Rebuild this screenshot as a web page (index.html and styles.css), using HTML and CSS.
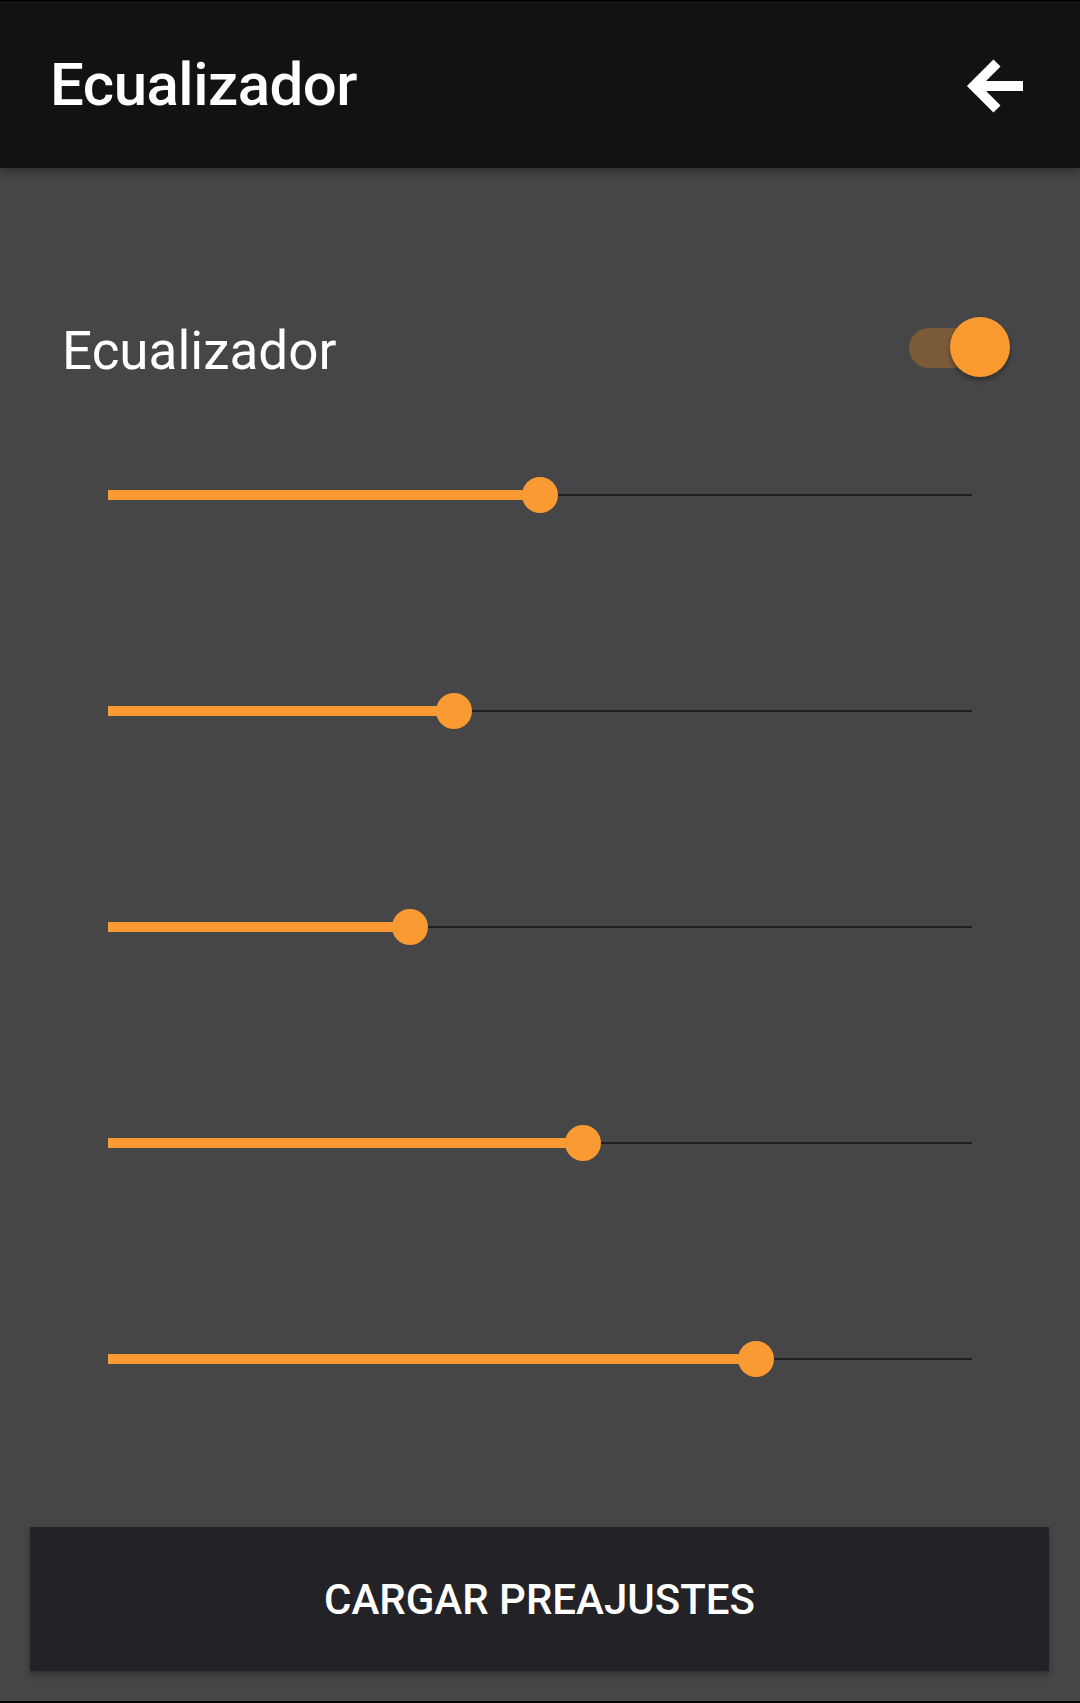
FILE: index.html
```html
<!DOCTYPE html>
<html lang="es">
<head>
<meta charset="utf-8">
<title>Ecualizador</title>
<link rel="stylesheet" href="styles.css">
</head>
<body>
<div class="screen">
  <header class="appbar">
    <h1 class="appbar-title">Ecualizador</h1>
    <button class="back" aria-label="Atrás">
      <svg viewBox="0 0 60 56" width="60" height="56"><path d="M31 5 L8 28 L31 51 M8 28 H57" fill="none" stroke="#fff" stroke-width="10"/></svg>
    </button>
  </header>
  <main class="content">
    <div class="toggle-row">
      <span class="toggle-label">Ecualizador</span>
      <span class="switch"><span class="switch-track"></span><span class="switch-thumb"></span></span>
    </div>
    <div class="sliders">
      <div class="slider-row"><div class="slider"><div class="fill" style="width:50%"></div><div class="thumb" style="left:50%"></div></div></div>
      <div class="slider-row"><div class="slider"><div class="fill" style="width:40%"></div><div class="thumb" style="left:40%"></div></div></div>
      <div class="slider-row"><div class="slider"><div class="fill" style="width:35%"></div><div class="thumb" style="left:35%"></div></div></div>
      <div class="slider-row"><div class="slider"><div class="fill" style="width:55%"></div><div class="thumb" style="left:55%"></div></div></div>
      <div class="slider-row"><div class="slider"><div class="fill" style="width:75%"></div><div class="thumb" style="left:75%"></div></div></div>
    </div>
    <button class="preset">CARGAR PREAJUSTES</button>
  </main>
</div>
</body>
</html>
```
FILE: styles.css
```css
html, body {
  margin: 0;
  padding: 0;
  background: #000;
}
.screen {
  width: 1080px;
  height: 1701px;
  background: #464547;
  font-family: Roboto, "Noto Sans", sans-serif;
  border-bottom: 2px solid #000;
  overflow: hidden;
}
.appbar {
  height: 168px;
  box-sizing: border-box;
  background: #121114;
  border-top: 1px solid #000;
  display: flex;
  align-items: center;
  justify-content: space-between;
  padding: 0 54px 0 50px;
  box-shadow: 0 4px 8px rgba(0,0,0,0.35);
  position: relative;
  z-index: 1;
}
.appbar-title {
  margin: 0;
  color: #fff;
  font-size: 60px;
  font-weight: 500;
  letter-spacing: -0.5px;
}
.back {
  background: none;
  border: 0;
  padding: 0;
  width: 60px;
  height: 56px;
  display: flex;
  margin-top: 2px;
}
.content {
  display: flex;
  flex-direction: column;
}
.toggle-row {
  margin-top: 139px;
  height: 80px;
  display: flex;
  align-items: center;
  justify-content: space-between;
  padding: 0 70px 0 62px;
}
.toggle-label {
  color: #fff;
  font-size: 53px;
  padding-top: 8px;
}
.switch {
  position: relative;
  width: 101px;
  height: 60px;
}
.switch-track {
  position: absolute;
  left: 0;
  top: 11px;
  width: 92px;
  height: 40px;
  border-radius: 20px;
  background: #7b5a37;
}
.switch-thumb {
  position: absolute;
  right: 0;
  top: 0;
  width: 60px;
  height: 60px;
  border-radius: 50%;
  background: #fa9a31;
  box-shadow: 0 3px 5px rgba(0,0,0,0.35);
}
.sliders {
  display: flex;
  flex-direction: column;
}
.slider-row {
  height: 216px;
  display: flex;
  align-items: center;
  padding: 0 108px 0 108px;
}
.slider {
  position: relative;
  flex: 1;
  height: 2px;
  background: #1f1e21;
}
.fill {
  position: absolute;
  left: 0;
  top: -4px;
  height: 10px;
  background: #f99a33;
}
.thumb {
  position: absolute;
  top: -17px;
  width: 36px;
  height: 36px;
  margin-left: -18px;
  border-radius: 50%;
  background: #f99a33;
}
.preset {
  margin: 60px 31px 0 30px;
  height: 144px;
  border: 0;
  background: #232226;
  color: #fff;
  font-family: Roboto, "Noto Sans", sans-serif;
  font-size: 42px;
  font-weight: 500;
  box-shadow: 0 4px 6px rgba(0,0,0,0.3);
}
```
